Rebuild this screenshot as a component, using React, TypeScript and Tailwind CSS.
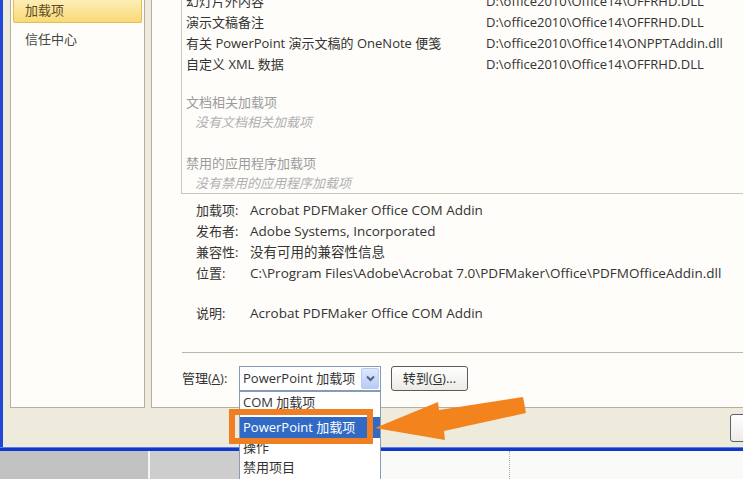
import React from 'react';

const addins = [
  ['幻灯片外内容', 'D:\\office2010\\Office14\\OFFRHD.DLL'],
  ['演示文稿备注', 'D:\\office2010\\Office14\\OFFRHD.DLL'],
  ['有关 PowerPoint 演示文稿的 OneNote 便笺', 'D:\\office2010\\Office14\\ONPPTAddin.dll'],
  ['自定义 XML 数据', 'D:\\office2010\\Office14\\OFFRHD.DLL'],
];

const details = [
  ['加载项:', 'Acrobat PDFMaker Office COM Addin'],
  ['发布者:', 'Adobe Systems, Incorporated'],
  ['兼容性:', '没有可用的兼容性信息'],
  ['位置:', 'C:\\Program Files\\Adobe\\Acrobat 7.0\\PDFMaker\\Office\\PDFMOfficeAddin.dll'],
];

export default function App() {
  return (
    <div className="relative h-[479px] w-[743px] overflow-hidden bg-[#eeebdd] font-['Open_Sans','Noto_Sans_CJK_SC',sans-serif] text-[13px] text-[#333]">
      <div className="flex h-[447px]">
        <div className="w-[3px] shrink-0 bg-[#1f48d8]" />
        <div className="flex flex-1 flex-col">
          <div className="flex h-[408px] gap-[6px] pl-[7px]">
            {/* sidebar */}
            <div className="w-[135px] shrink-0 border-x border-b border-[#b3b0a2] bg-[#fefdf9] px-[2px]">
              <div className="flex h-[23px] items-center rounded-b-[2px] border-x border-b border-[#e4bd55] bg-gradient-to-b from-[#fdeeb6] to-[#f9d975] pl-[11px] text-[#5e4a20]">
                加载项
              </div>
              <div className="flex h-[32px] items-center pl-[12px] pt-[1px] text-[#444]">信任中心</div>
            </div>

            {/* main panel */}
            <div className="w-[640px] shrink-0 border-l border-b border-[#b3b0a2] bg-[#fefdf9] pl-[29px]">
              <div className="-mt-[9px] w-[620px] border-l border-b border-[#c9c6bb] pl-[4px]">
                {addins.map(([name, path]) => (
                  <div key={name} className="flex h-[21px] items-center">
                    <span className="w-[300px] shrink-0">{name}</span>
                    <span>{path}</span>
                  </div>
                ))}
                <div className="mt-[17px] flex h-[21px] items-center text-[#9b9b9b]">文档相关加载项</div>
                <div className="flex h-[20px] items-center pl-[9px] italic text-[#b0b0b0]">没有文档相关加载项</div>
                <div className="mt-[20px] flex h-[21px] items-center text-[#9b9b9b]">禁用的应用程序加载项</div>
                <div className="flex h-[19px] items-center pl-[9px] italic text-[#b0b0b0]">没有禁用的应用程序加载项</div>
              </div>

              <div className="mt-[6px] pl-[15px]">
                {details.map(([label, value]) => (
                  <div key={label} className="flex h-[21px] items-center">
                    <span className="w-[54px] shrink-0">{label}</span>
                    <span className="whitespace-nowrap text-[13.5px]">{value}</span>
                  </div>
                ))}
                <div className="mt-[19px] flex h-[21px] items-center">
                  <span className="w-[54px] shrink-0">说明:</span>
                  <span className="text-[13.5px]">Acrobat PDFMaker Office COM Addin</span>
                </div>
              </div>

              <div className="ml-[1px] mt-[28px] h-px w-[600px] bg-[#b9b6aa]" />

              <div className="ml-[1px] mt-[13px] flex items-center">
                <span className="w-[57px] shrink-0">
                  管理(<span className="underline">A</span>):
                </span>
                <div className="flex h-[25px] w-[142px] items-center border border-[#7f9db9] bg-white pl-[3px] pr-[1px]">
                  <span className="flex-1">PowerPoint 加载项</span>
                  <div className="flex h-[21px] w-[18px] items-center justify-center rounded-[2px] border border-[#b9c9ef] bg-gradient-to-b from-[#dfe8fd] to-[#b8cbf5]">
                    <svg width="9" height="7" viewBox="0 0 9 7">
                      <path d="M1 1.5 L4.5 5 L8 1.5" fill="none" stroke="#4d6185" strokeWidth="2" />
                    </svg>
                  </div>
                </div>
                <div className="ml-[10px] flex h-[25px] w-[77px] items-center justify-center rounded-[3px] border border-[#5b5b5b] bg-gradient-to-b from-[#ffffff] to-[#ecebe6]">
                  转到(<span className="underline">G</span>)...
                </div>
              </div>
            </div>
          </div>
          <div className="flex flex-1 items-center pl-[727px]">
            <div className="h-[28px] w-[60px] rounded-[3px] border border-[#5a6070] bg-gradient-to-b from-white to-[#ecebe6]" />
          </div>
        </div>
      </div>

      <div className="h-[4px] border-t border-[#5b7ee8] bg-[#1238c9]" />

      <div className="flex h-[28px]">
        <div className="w-[148px] bg-[#c2c2c2]" />
        <div className="w-[2px] bg-[#f4f4f4]" />
        <div className="w-[230px] bg-[#cdcdcd]" />
        <div className="w-[130px] border-r border-dotted border-[#b0b0b0] bg-[#fafaf8]" />
        <div className="flex-1 bg-[#fafaf8]" />
      </div>

      {/* open dropdown list */}
      <div className="absolute left-[239px] top-[391px] h-[100px] w-[142px] border border-[#8a9cb4] bg-white">
        <div className="flex h-[22px] items-center pl-[3px]">COM 加载项</div>
        <div className="mt-[3px] flex h-[21px] items-center bg-[#316ac5] pl-[3px] text-white">PowerPoint 加载项</div>
        <div className="flex h-[20px] items-center pl-[3px]">操作</div>
        <div className="flex h-[20px] items-center pl-[3px]">禁用项目</div>
      </div>

      {/* orange highlight box */}
      <div className="absolute left-[229px] top-[409px] h-[35px] w-[144px] border-[6px] border-[#ef7f22]" />

      {/* orange arrow */}
      <svg className="absolute left-0 top-0" width="743" height="479" viewBox="0 0 743 479">
        <polygon
          points="375,428 438,402 439,410 523,397 526,413 444,431 445,440"
          fill="#f3841d"
        />
      </svg>
    </div>
  );
}
